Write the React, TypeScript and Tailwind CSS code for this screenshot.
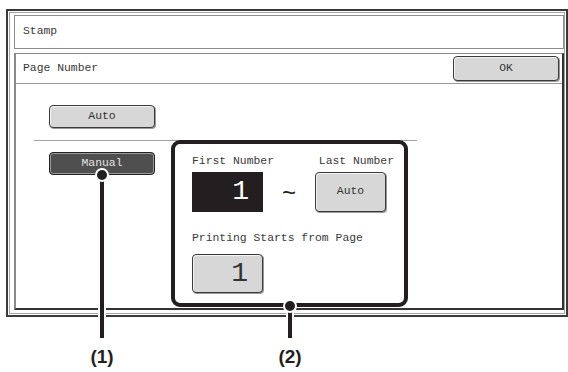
const mono = "font-['Liberation_Mono','DejaVu_Sans_Mono',monospace]"

function GrayButton({ label, className }: { label: string; className: string }) {
  return (
    <div
      className={`flex items-center justify-center rounded-[4px] border border-[#3a3a3a] bg-[#d7d7d7] text-[#333] shadow-[inset_1px_1px_0_#f4f4f4,1px_1px_0_#9a9a9a] ${className}`}
    >
      {label}
    </div>
  )
}

function Connector({ x, top, label }: { x: number; top: number; label: string }) {
  return (
    <>
      <div
        className="absolute w-[8px] border-x-2 border-white bg-[#231f20]"
        style={{ left: x - 4, top, height: 338 - top }}
      />
      <div
        className="absolute h-[14px] w-[14px] rounded-full border-2 border-white bg-[#231f20]"
        style={{ left: x - 7, top: top - 7 }}
      />
      <div
        className="absolute w-[40px] text-center font-['Liberation_Sans',Arial,sans-serif] text-[19px] font-bold leading-[20px] text-[#231f20]"
        style={{ left: x - 20, top: 347 }}
      >
        {label}
      </div>
    </>
  )
}

export default function App() {
  return (
    <div className={`relative h-[372px] w-[568px] overflow-hidden bg-white pl-[6px] pt-[9px] text-[11.4px] text-[#3a3a3a] ${mono}`}>
      <div className="h-[308px] w-[562px] border-2 border-[#3a3a3a] p-[1px]">
        <div className="flex h-full flex-col border border-[#a3a3a3] pb-[3px] pl-[4px] pt-[2px]">
          <div className="flex h-[34px] items-center border border-[#8c8c8c] pl-[8px]">Stamp</div>

          <div className="mt-[4px] flex flex-1 flex-col border-l-2 border-t border-[#8a8a8a] border-b-2 border-r-2 border-b-[#333] border-r-[#333]">
            <div className="flex h-[30px] items-center justify-between border-b border-[#9a9a9a] pl-[7px] pr-[3px]">
              <span>Page Number</span>
              <GrayButton label="OK" className="h-[25px] w-[106px]" />
            </div>

            <div className="pt-[21px]">
              <GrayButton label="Auto" className="ml-[33px] h-[23px] w-[106px]" />
              <div className="ml-[18px] mt-[12px] h-px w-[383px] bg-[#a0a0a0]" />
              <div className="flex items-start">
                <div className="ml-[33px] mt-[11px] flex h-[23px] w-[106px] items-center justify-center rounded-[4px] border border-[#222] bg-[#4f4f4f] text-[#e2e2e2] shadow-[inset_0_0_0_1px_#9a9a9a]">
                  Manual
                </div>
                <div className="-mt-px ml-[16px] h-[167px] w-[237px] rounded-[9px] border-4 border-[#231f20] pl-[17px] pr-[10px] pt-[11px]">
                  <div className="flex h-[14px] items-center justify-between">
                    <span>First Number</span>
                    <span>Last Number</span>
                  </div>
                  <div className="mt-[3px] flex items-center">
                    <div className="flex h-[40px] w-[71px] items-center justify-end bg-[#231f20] pr-[14px] text-[28px] text-white">1</div>
                    <div className="w-[52px] pt-[2px] text-center font-['Liberation_Sans',Arial,sans-serif] text-[24px] text-[#231f20]">~</div>
                    <GrayButton label="Auto" className="h-[40px] w-[71px]" />
                  </div>
                  <div className="mt-[20px] flex h-[14px] items-center">Printing Starts from Page</div>
                  <div className="mt-[8px] flex h-[39px] w-[71px] items-center justify-end rounded-[4px] border border-[#3a3a3a] bg-[#d7d7d7] pr-[14px] text-[28px] text-[#333] shadow-[inset_1px_1px_0_#f4f4f4,1px_1px_0_#9a9a9a]">
                    1
                  </div>
                </div>
              </div>
            </div>
          </div>
        </div>
      </div>

      <Connector x={102} top={175} label="(1)" />
      <Connector x={290} top={306} label="(2)" />
    </div>
  )
}
